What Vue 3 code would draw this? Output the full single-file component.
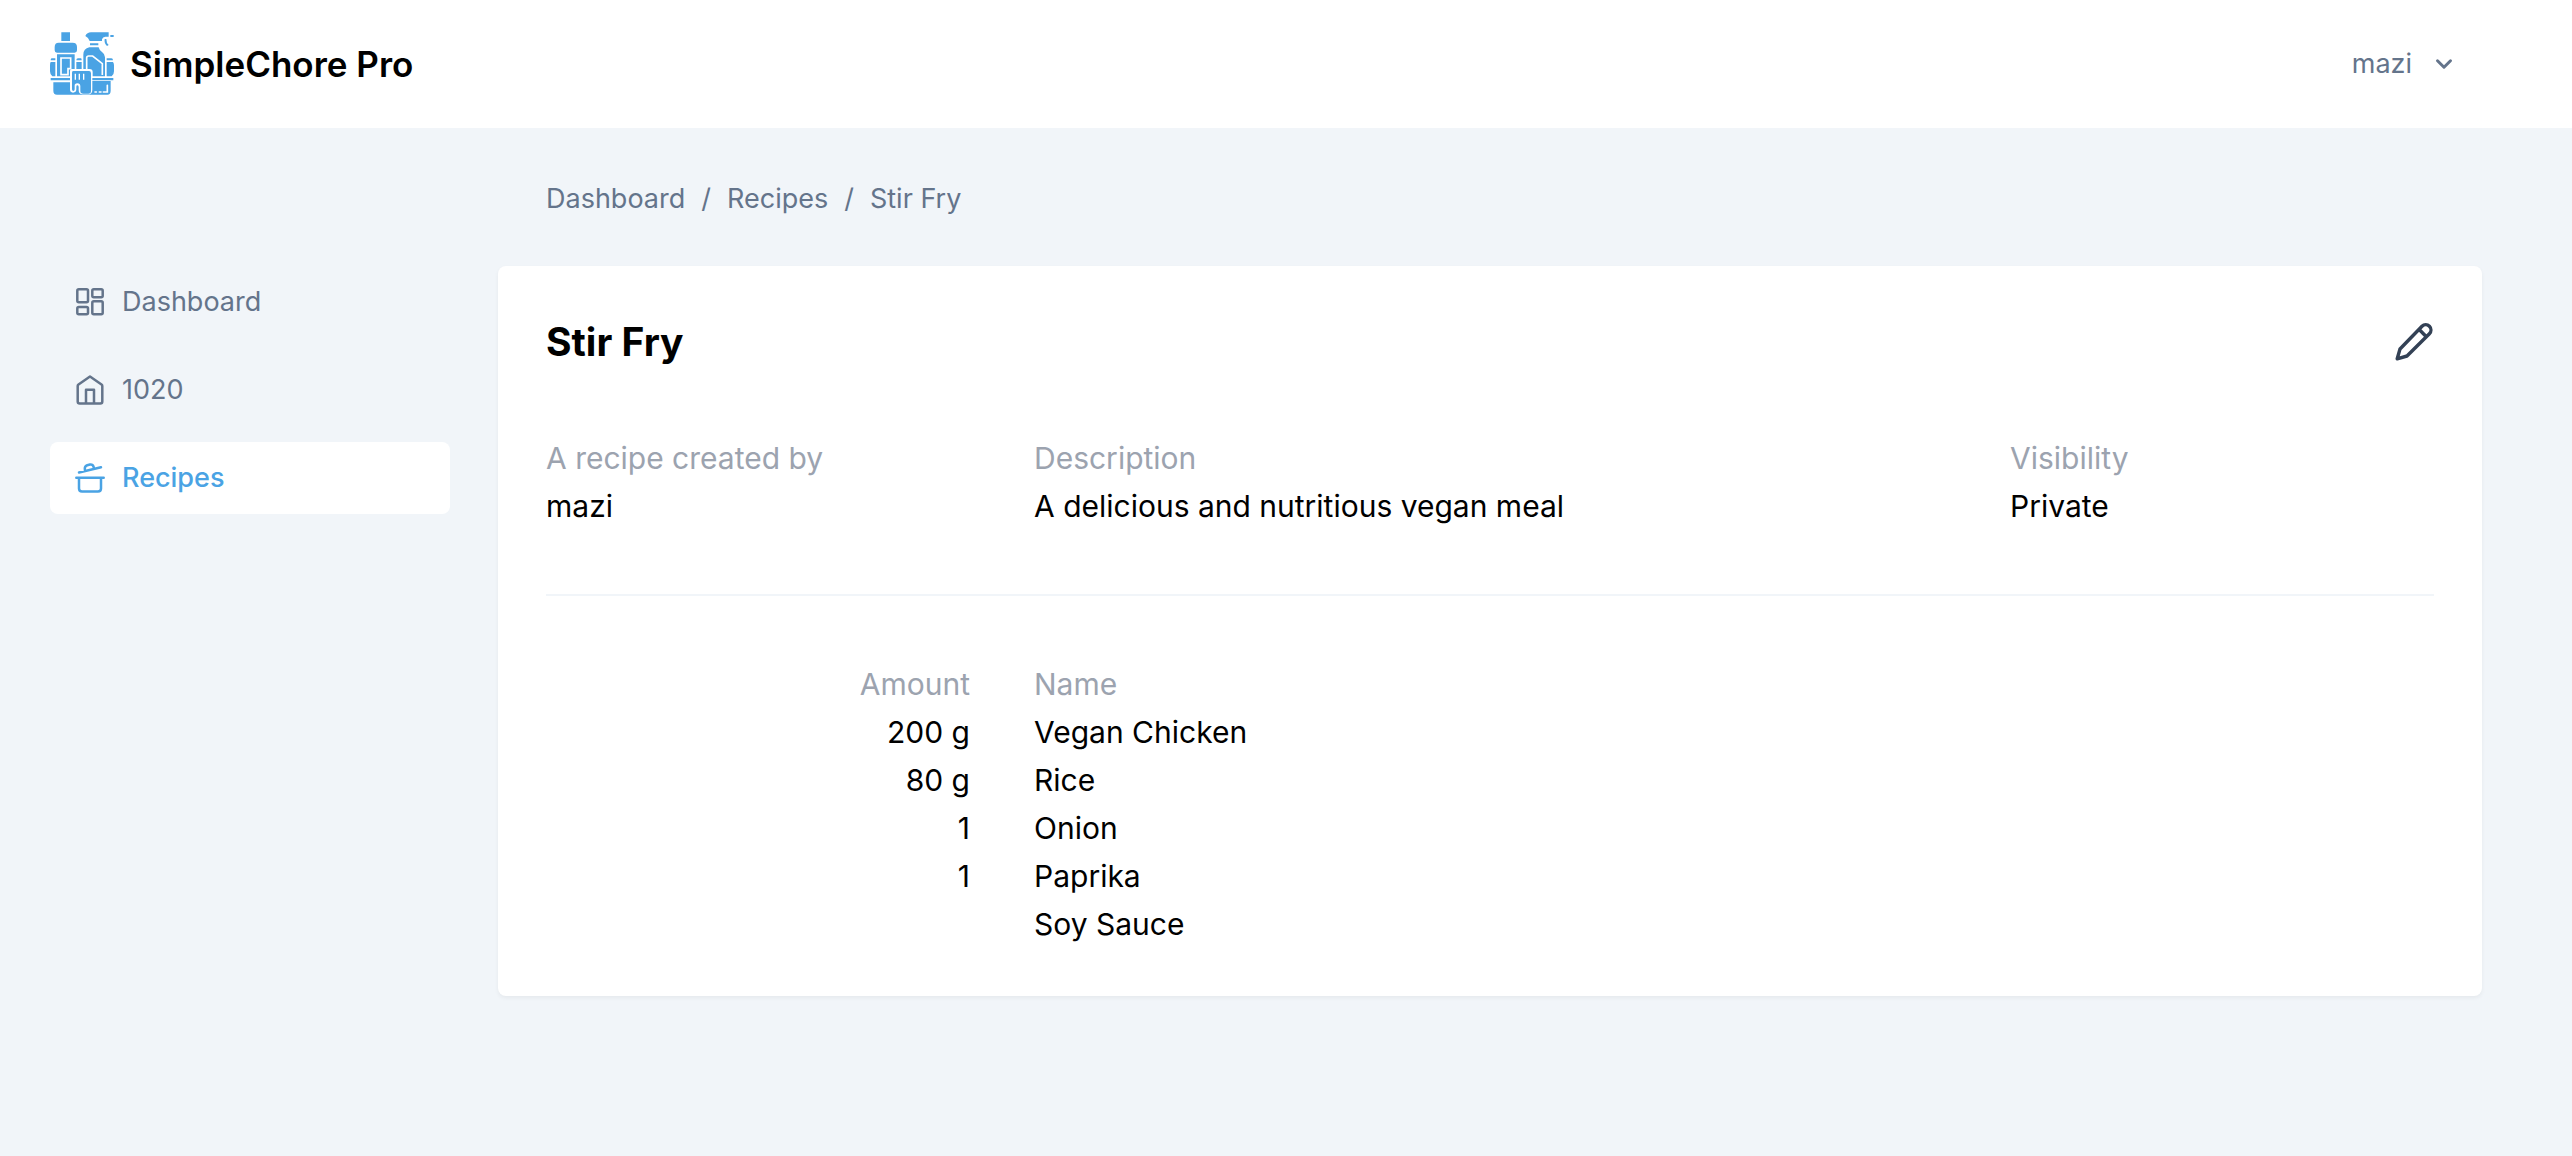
<script setup>
const crumbs = ['Dashboard', 'Recipes', 'Stir Fry']

const details = [
  { label: 'A recipe created by', value: 'mazi' },
  { label: 'Description', value: 'A delicious and nutritious vegan meal', wide: true },
  { label: 'Visibility', value: 'Private' },
]

const ingredients = [
  { amount: '200 g', name: 'Vegan Chicken' },
  { amount: '80 g', name: 'Rice' },
  { amount: '1', name: 'Onion' },
  { amount: '1', name: 'Paprika' },
  { amount: '', name: 'Soy Sauce' },
]
</script>

<template>
  <div class="page">
    <header class="topbar">
      <a href="#" class="brand">
        <svg class="logo" viewBox="30 36 192 192" aria-hidden="true">
          <g fill="#4aa3e4">
            <path d="M64 37h26v26H64zM56 68h42q13 0 13 13v10q0 7-7 7H51q-7 0-7-7V81q0-13 12-13z" />
            <path d="M51 103h53v44H95q-5 0-5 6v16H51z" />
            <path d="M136 48q5-11 17-11h53v13h-10q-8 0-10 8v5h-37q-3-10-13-15zM211 45h10v6h-10zM194 57h5q0 12 7 18l-5 3q-9-8-7-21zM150 70h25v6h-25z" />
            <path d="M148 82h28q2 9 10 14 9 6 9 16v57h-37v-13q0-9-9-9h-19v-43q0-18 18-22z" />
            <path d="M35 115h11v6H32q0-6 3-6zM32 126h14v43H37q-7-5-7-15v-18q0-7 2-10zM114 115h9q2 0 2 6h-16q0-6 5-6zM109 126h16v21h-16zM200 115h14q5 0 5 6h-19zM200 126h19q3 4 3 10v18q0 10-7 15h-15z" />
            <path d="M32 174h58v7H32zM157 174h63v7h-63z" />
            <path d="M40 187h50v21q0 10 9 10 10 0 10-10v-8q0-4 3-4t4 4v10q0 13 12 13h15q14 0 14-14v-26h55v29q0 12-10 12H51q-11 0-11-12z" />
            <path d="M99 153h48q6 0 6 7v53q0 8-8 8h-15q-9 0-9-8v-14q0-9-9-9t-8 8v10q0 5-4 5t-4-5v-50q0-5 3-5z" />
          </g>
          <path d="M63 114h29v32h-8v18H63zM140 114q0-6 6-6h12l29 23v34M140 114v34" fill="none" stroke="#fff" stroke-width="5" />
          <path d="M106 161v18M118 161v18M131 161v18" fill="none" stroke="#fff" stroke-width="4" />
          <path d="M202 196v20h-12M183 216h-5M169 216h-4" fill="none" stroke="#fff" stroke-width="5" stroke-linecap="round" />
        </svg>
        <span>SimpleChore Pro</span>
      </a>
      <button type="button" class="account">
        <span>mazi</span>
        <svg width="28" height="28" viewBox="0 0 28 28" aria-hidden="true">
          <path d="M7.5 10.8 14 17.2 20.5 10.8" fill="none" stroke="currentColor" stroke-width="3" stroke-linecap="round" stroke-linejoin="round" />
        </svg>
      </button>
    </header>

    <div class="body">
      <nav class="sidebar" aria-label="Main">
        <a href="#" class="nav-item">
          <svg class="nav-icon" viewBox="0 0 32 32" aria-hidden="true">
            <rect x="3.3" y="3.3" width="10.7" height="13" rx="1.5" />
            <rect x="18.3" y="3.3" width="10.4" height="8" rx="1.5" />
            <rect x="3.3" y="21" width="10.7" height="7.3" rx="1.5" />
            <rect x="18.3" y="15.3" width="10.4" height="13" rx="1.5" />
          </svg>
          <span>Dashboard</span>
        </a>
        <a href="#" class="nav-item">
          <svg class="nav-icon" viewBox="0 0 32 32" aria-hidden="true">
            <path d="M16 2.5 4.5 10.5Q3.7 11.1 3.7 12V27.5Q3.7 29.5 5.7 29.5H26.3Q28.3 29.5 28.3 27.5V12Q28.3 11.1 27.5 10.5ZM12 29.5V15.7H20V29.5" />
          </svg>
          <span>1020</span>
        </a>
        <a href="#" class="nav-item active" aria-current="page">
          <svg class="nav-icon" viewBox="0 0 32 32" aria-hidden="true">
            <path d="M2.3 15.7H29.7M5 15.7V26.6Q5 29.6 8 29.6H24Q27 29.6 27 26.6V15.7M5 10.5 27 5.2M11 9 10.8 6.5Q10.8 4 13.2 3.2L16 2.5Q18.8 2.2 19.6 4.8L20 6.8" />
          </svg>
          <span>Recipes</span>
        </a>
      </nav>

      <main class="content">
        <nav class="crumbs" aria-label="Breadcrumb">
          <template v-for="(crumb, i) in crumbs" :key="crumb">
            <span v-if="i > 0">/</span>
            <a href="#">{{ crumb }}</a>
          </template>
        </nav>

        <article class="card">
          <div class="card-head">
            <h1>Stir Fry</h1>
            <button type="button" class="edit" aria-label="Edit recipe">
              <svg width="40" height="40" viewBox="0 0 40 40" aria-hidden="true">
                <path d="M28 4.3A5.2 5.2 0 0 1 35.4 11.7L13 34 3.2 36.8 6 27ZM25 7.3 32.3 14.7" fill="none" stroke="currentColor" stroke-width="3.4" stroke-linecap="round" stroke-linejoin="round" />
              </svg>
            </button>
          </div>

          <dl class="details">
            <div v-for="d in details" :key="d.label" :class="{ wide: d.wide }">
              <dt>{{ d.label }}</dt>
              <dd>{{ d.value }}</dd>
            </div>
          </dl>

          <table class="ingredients">
            <thead>
              <tr>
                <th scope="col" class="amount">Amount</th>
                <th scope="col">Name</th>
              </tr>
            </thead>
            <tbody>
              <tr v-for="item in ingredients" :key="item.name">
                <td class="amount">{{ item.amount }}</td>
                <td>{{ item.name }}</td>
              </tr>
            </tbody>
          </table>
        </article>
      </main>
    </div>
  </div>
</template>

<style>
body {
  margin: 0;
  background: #f1f5f9;
}
</style>

<style scoped>
.page {
  min-height: 100vh;
  background: #f1f5f9;
  color: #000;
  font-family: Inter, "Liberation Sans", sans-serif;
  font-size: 30px;
  line-height: 48px;
}
a {
  color: inherit;
  text-decoration: none;
}
button {
  padding: 0;
  border: 0;
  background: none;
  font: inherit;
  cursor: pointer;
}
svg {
  display: block;
  flex: none;
}
.topbar {
  display: flex;
  align-items: center;
  justify-content: space-between;
  padding: 32px 90px 32px 50px;
  background: #fff;
}
.brand {
  display: flex;
  align-items: center;
  gap: 16px;
  font-size: 35px;
  font-weight: 600;
}
.logo {
  width: 64px;
  height: 64px;
}
.account {
  display: flex;
  align-items: center;
  gap: 18px;
  padding: 0 24px;
  color: #64748b;
  font-size: 27px;
}
.body {
  display: flex;
  gap: 48px;
  padding: 0 90px 48px 50px;
}
.sidebar {
  display: flex;
  flex: none;
  flex-direction: column;
  gap: 16px;
  width: 400px;
  padding-top: 138px;
}
.nav-item {
  display: flex;
  align-items: center;
  gap: 16px;
  height: 72px;
  padding: 0 24px;
  border-radius: 8px;
  color: #64748b;
  font-size: 27px;
}
.nav-item.active {
  background: #fff;
  color: #4aa3e4;
  font-weight: 500;
}
.nav-icon {
  width: 32px;
  height: 32px;
  fill: none;
  stroke: currentColor;
  stroke-width: 2.5;
  stroke-linecap: round;
  stroke-linejoin: round;
}
.content {
  flex: 1;
  min-width: 0;
}
.crumbs {
  display: flex;
  gap: 16px;
  padding: 50px 48px 46px;
  color: #64748b;
  font-size: 27px;
  line-height: 42px;
}
.card {
  padding: 48px;
  border-radius: 8px;
  background: #fff;
  box-shadow: 0 2px 4px rgba(0, 0, 0, 0.05);
}
.card-head {
  display: flex;
  align-items: center;
  justify-content: space-between;
}
h1 {
  margin: 0;
  font-size: 39px;
  font-weight: 700;
  line-height: 56px;
}
.edit {
  color: #334155;
}
.details,
.ingredients tr {
  display: grid;
  grid-template-columns: repeat(4, 1fr);
  column-gap: 64px;
}
.details {
  margin: 64px 0;
  padding-bottom: 64px;
  border-bottom: 2px solid #f1f5f9;
}
.wide {
  grid-column: span 2;
}
dt,
th {
  color: #9ca3af;
  font-weight: 400;
}
dd {
  margin: 0;
}
.ingredients,
.ingredients thead,
.ingredients tbody {
  display: block;
}
th,
td {
  padding: 0;
  text-align: left;
}
.ingredients .amount {
  text-align: right;
}
</style>
